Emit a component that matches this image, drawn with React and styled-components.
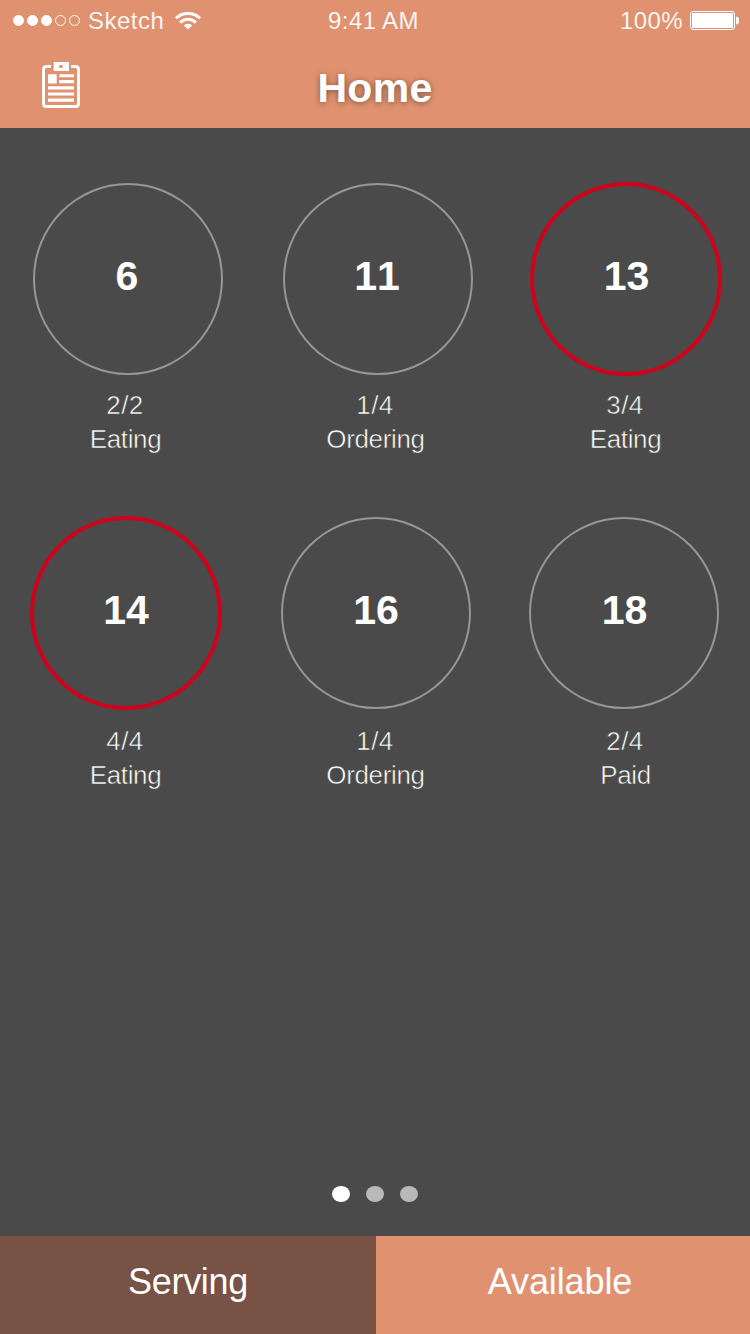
import React from "react";
import styled, { createGlobalStyle } from "styled-components";

const GlobalStyle = createGlobalStyle`
  * { box-sizing: border-box; }
  body {
    margin: 0;
    background: #4a4a4a;
    font-family: "Liberation Sans", Arial, sans-serif;
    color: #fff;
  }
`;

const Screen = styled.div`
  width: 750px;
  height: 1334px;
  display: flex;
  flex-direction: column;
  overflow: hidden;
`;

const Header = styled.header`
  height: 128px;
  background: #e09270;
`;

const StatusBar = styled.div`
  height: 40px;
  display: grid;
  grid-template-columns: 1fr auto 1fr;
  align-items: center;
  padding: 1px 11px 0 13px;
  font-size: 24px;
  line-height: 40px;
  -webkit-text-stroke: 0.2px #e09270;
`;

const StatusGroup = styled.div`
  display: flex;
  align-items: center;
  justify-content: ${(p) => (p.$end ? "flex-end" : "flex-start")};

  svg {
    margin-bottom: 1px;
  }
`;

const Signal = styled.div`
  display: flex;
  gap: 3px;
  margin: 0 8px 2px 0;
`;

const SignalDot = styled.i`
  width: 11px;
  height: 11px;
  border-radius: 50%;
  border: 1px solid #fff;
  background: ${(p) => (p.$on ? "#fff" : "transparent")};
`;

const Carrier = styled.span`
  letter-spacing: 0.5px;
  margin-right: 11px;
`;

const Clock = styled.span`
  letter-spacing: 0.4px;
  margin: 0 3px 0 -2px;
`;

const Percent = styled.span`
  letter-spacing: 0.4px;
  margin-right: 7px;
`;

const NavBar = styled.div`
  height: 88px;
  display: grid;
  grid-template-columns: 80px 1fr 80px;
  align-items: center;
`;

const MenuButton = styled.button`
  display: flex;
  border: 0;
  padding: 0 0 0 42px;
  margin-top: 2px;
  background: none;
`;

const Title = styled.h1`
  margin: 8px 0 0;
  text-align: center;
  font-size: 41px;
  line-height: 48px;
  font-weight: 700;
  letter-spacing: 0.3px;
  text-shadow: 0 1px 6px rgba(0, 0, 0, 0.45);
`;

const TableGrid = styled.main`
  flex: 1;
  display: grid;
  grid-template-columns: repeat(3, 250px);
  grid-template-rows: 334px 335px;
  padding-top: 54px;
`;

const Tile = styled.div`
  display: flex;
  flex-direction: column;
`;

const Ring = styled.div`
  width: ${(p) => (p.$alert ? 192 : 190)}px;
  height: ${(p) => (p.$alert ? 194 : 192)}px;
  margin: ${(p) => (p.$alert ? 0 : 1)}px 0 ${(p) => (p.$alert ? 0 : 1)}px ${(p) => p.$inset}px;
  border: ${(p) => (p.$alert ? "4px solid #d0021b" : "2px solid #979797")};
  border-radius: 50%;
  display: flex;
  align-items: center;
  justify-content: center;
`;

const TableNumber = styled.span`
  font-size: 41px;
  line-height: 46px;
  font-weight: 700;
  font-kerning: none;
  margin: 0 0 6px ${(p) => p.$nudge || 0}px;
`;

const Info = styled.div`
  margin-top: ${(p) => p.$gap}px;
  text-align: center;
  font-size: 26px;
  line-height: 34px;
  -webkit-text-stroke: 0.55px #4a4a4a;
`;

const Seats = styled.div`
  letter-spacing: 0.4px;
`;

const State = styled.div`
  letter-spacing: -0.35px;
  padding-left: 1px;
`;

const Pager = styled.div`
  display: flex;
  justify-content: center;
  gap: 16px;
  padding-bottom: 34px;
`;

const PageDot = styled.i`
  width: 18px;
  height: 16px;
  border-radius: 50%;
  background: ${(p) => (p.$active ? "#fff" : "#b9b9b9")};
`;

const Tabs = styled.nav`
  display: grid;
  grid-template-columns: 376px 1fr;
  height: 98px;
`;

const Tab = styled.button`
  border: 0;
  padding: 0 ${(p) => (p.$active ? 0 : 6)}px 6px 0;
  font: 36px "Liberation Sans", Arial, sans-serif;
  letter-spacing: ${(p) => (p.$active ? -0.3 : -0.1)}px;
  color: #fff;
  background: ${(p) => (p.$active ? "#785244" : "#e09270")};
`;

const ClipboardIcon = () => (
  <svg width="38" height="46" viewBox="0 0 38 46" fill="#fff">
    <path
      d="M9 4.5H4.5Q1.5 4.5 1.5 7.5V41.5Q1.5 44.5 4.5 44.5H33.5Q36.5 44.5 36.5 41.5V7.5Q36.5 4.5 33.5 4.5H29"
      fill="none"
      stroke="#fff"
      strokeWidth="3"
    />
    <path d="M11.7 0H27V9H11.7ZM17.3 3V6H20.7V3Z" fillRule="evenodd" />
    <path d="M6 12.2H14.7V21.5H6ZM17.3 12.2H32V15.3H17.3ZM17.3 18.1H32V21.2H17.3ZM6 24.3H32V27.5H6ZM6 30.4H32V33.6H6ZM6 36.5H32V39.7H6Z" />
  </svg>
);

const WifiIcon = () => (
  <svg width="26" height="18" viewBox="0 0 26 18" fill="none" stroke="#fff" strokeWidth="3">
    <path d="M1 6.3A17.2 17.2 0 0 1 25 6.3" />
    <path d="M5.2 10.6A11 11 0 0 1 20.8 10.6" />
    <path d="M13 17.6L8.8 13.6A5.8 5.8 0 0 1 17.2 13.6Z" fill="#fff" stroke="none" />
  </svg>
);

const BatteryIcon = () => (
  <svg width="49" height="19" viewBox="0 0 49 19">
    <rect x="0.5" y="0.5" width="44" height="18" rx="2.5" fill="none" stroke="#fff" />
    <rect x="2" y="2" width="41" height="15" rx="1" fill="#fff" />
    <path d="M46 5.7H47Q49 6 49 8V11Q49 13 47 13.3H46Z" fill="#fff" />
  </svg>
);

const tables = [
  { number: 6, seats: "2/2", state: "Eating", inset: 33, nudge: -2 },
  { number: 11, seats: "1/4", state: "Ordering", inset: 33, nudge: -2 },
  { number: 13, seats: "3/4", state: "Eating", inset: 30, alert: true, nudge: 1 },
  { number: 14, seats: "4/4", state: "Eating", inset: 30, alert: true },
  { number: 16, seats: "1/4", state: "Ordering", inset: 31 },
  { number: 18, seats: "2/4", state: "Paid", inset: 29, nudge: 1 },
];

export default function App() {
  return (
    <Screen>
      <GlobalStyle />
      <Header>
        <StatusBar>
          <StatusGroup>
            <Signal>
              {[true, true, true, false, false].map((on, i) => (
                <SignalDot key={i} $on={on} />
              ))}
            </Signal>
            <Carrier>Sketch</Carrier>
            <WifiIcon />
          </StatusGroup>
          <Clock>9:41 AM</Clock>
          <StatusGroup $end>
            <Percent>100%</Percent>
            <BatteryIcon />
          </StatusGroup>
        </StatusBar>
        <NavBar>
          <MenuButton aria-label="Orders">
            <ClipboardIcon />
          </MenuButton>
          <Title>Home</Title>
        </NavBar>
      </Header>
      <TableGrid>
        {tables.map((t, i) => (
          <Tile key={t.number}>
            <Ring $alert={t.alert} $inset={t.inset}>
              <TableNumber $nudge={t.nudge}>{t.number}</TableNumber>
            </Ring>
            <Info $gap={i < 3 ? 12 : 14}>
              <Seats>{t.seats}</Seats>
              <State>{t.state}</State>
            </Info>
          </Tile>
        ))}
      </TableGrid>
      <Pager>
        <PageDot $active />
        <PageDot />
        <PageDot />
      </Pager>
      <Tabs>
        <Tab $active>Serving</Tab>
        <Tab>Available</Tab>
      </Tabs>
    </Screen>
  );
}
